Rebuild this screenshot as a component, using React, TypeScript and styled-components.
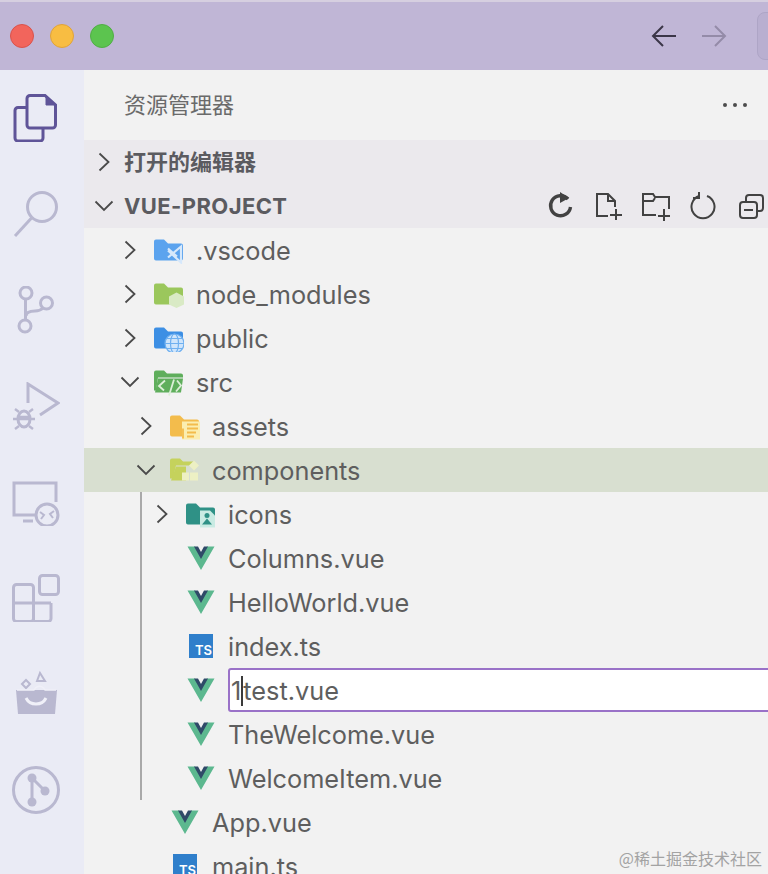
import React from "react";
import styled, { createGlobalStyle } from "styled-components";

const GlobalStyle = createGlobalStyle`
  html, body {
    margin: 0;
    padding: 0;
    background: #f2f2f2;
  }
  body {
    font-family: Inter, "Noto Sans CJK SC", sans-serif;
  }
`;

const Shell = styled.div`
  position: relative;
  width: 768px;
  height: 874px;
  overflow: hidden;
  background: #f2f2f2;
`;

const TitleBar = styled.div`
  display: flex;
  align-items: center;
  width: 800px;
  height: 70px;
  box-sizing: border-box;
  padding: 0 3px 0 10px;
  background: #c0b6d6;
  border-top: 2px solid #d6cfe0;
`;

const Light = styled.span<{ $color: string; $edge: string }>`
  width: 24px;
  height: 24px;
  box-sizing: border-box;
  border-radius: 50%;
  margin-right: 16px;
  background: ${(p) => p.$color};
  border: 1px solid ${(p) => p.$edge};
`;

const NavArrows = styled.div`
  display: flex;
  align-items: center;
  gap: 24px;
  margin-left: auto;
  margin-right: 30px;
`;

const SearchBox = styled.div`
  width: 40px;
  height: 48px;
  box-sizing: border-box;
  border-radius: 8px;
  background: #b9afd0;
  border: 1px solid #aea5c6;
`;

const Body = styled.div`
  display: flex;
  height: 804px;
`;

const ActivityBar = styled.nav`
  flex: 0 0 84px;
  background: #eaebf5;
`;

const ActivitySlot = styled.div`
  display: flex;
  align-items: center;
  height: 96px;
  padding-left: 12px;
`;

const SideBar = styled.section`
  flex: 1;
  min-width: 0;
  overflow: hidden;
`;

const PanelHeader = styled.div`
  display: flex;
  align-items: center;
  justify-content: space-between;
  height: 70px;
  box-sizing: border-box;
  padding: 0 21px 0 40px;
  font-size: 22px;
  color: #6a6a6a;
`;

const PanelTitle = styled.span`
  margin-bottom: 4px;
`;

const Dots = styled.div`
  display: flex;
  gap: 6px;
`;

const Dot = styled.span`
  width: 4px;
  height: 4px;
  border-radius: 50%;
  background: #4d4d4d;
`;

const SectionRow = styled.div`
  display: flex;
  align-items: center;
  height: 44px;
  padding: 0 2px 0 8px;
  background: #ebe9ed;
  color: #5b5b60;
  font-size: 22px;
  font-weight: 700;
`;

const SectionChevron = styled.span`
  display: flex;
  justify-content: center;
  width: 24px;
  margin-right: 8px;
`;

const CjkLabel = styled.span`
  margin-bottom: 4px;
`;

const ProjectLabel = styled.span`
  letter-spacing: 0.4px;
`;

const SectionTools = styled.div`
  display: flex;
  align-items: center;
  gap: 20px;
  margin-left: auto;
`;

const Row = styled.div<{ $indent: number; $selected?: boolean }>`
  display: flex;
  align-items: center;
  height: 44px;
  padding-left: ${(p) => p.$indent}px;
  background: ${(p) => (p.$selected ? "#d8dfd0" : "transparent")};
  color: #5e5e5e;
  font-size: 25.3px;
  white-space: nowrap;
`;

const Name = styled.span`
  margin-top: 1px;
`;

const ChevronSlot = styled.span`
  display: flex;
  justify-content: center;
  flex: 0 0 24px;
  margin-right: 12px;
`;

const IconSlot = styled.span`
  display: flex;
  align-items: center;
  justify-content: center;
  flex: 0 0 30px;
  margin-right: 12px;
`;

const Guide = styled.div`
  margin-left: 56px;
  border-left: 2px solid #a9a9a9;
`;

const TsBadge = styled.span`
  display: flex;
  align-items: flex-end;
  justify-content: flex-end;
  width: 24px;
  height: 24px;
  box-sizing: border-box;
  padding: 0 1px 1px 0;
  background: #2f7fcb;
  color: #ffffff;
  font-size: 13px;
  font-weight: 600;
  line-height: 13px;
`;

const NameInput = styled.div`
  flex: 1;
  height: 44px;
  box-sizing: border-box;
  display: flex;
  align-items: center;
  padding: 1px 0 0 1px;
  margin-right: -40px;
  background: #ffffff;
  border: 2px solid #9a72c8;
  border-radius: 3px 0 0 3px;
`;

const Caret = styled.span`
  display: inline-block;
  width: 2px;
  height: 30px;
  background: #3a3a3a;
`;

const Watermark = styled.div`
  position: absolute;
  right: 6px;
  bottom: 5px;
  font-family: "Noto Sans CJK SC", sans-serif;
  font-size: 16px;
  line-height: 22px;
  color: #a3a3a3;
`;

const Chevron = ({ open }: { open?: boolean }) =>
  open ? (
    <svg width="20" height="12" viewBox="0 0 20 12" fill="none" stroke="#4a4a4a" strokeWidth="1.8">
      <path d="M1.5 1.5 L10 10 L18.5 1.5" />
    </svg>
  ) : (
    <svg width="12" height="20" viewBox="0 0 12 20" fill="none" stroke="#4a4a4a" strokeWidth="1.8">
      <path d="M1.5 1.5 L10.5 10 L1.5 18.5" />
    </svg>
  );

const VueIcon = () => (
  <svg width="28" height="24" viewBox="0 0 28 24">
    <path d="M0.5 0.5 H8 L14 10 L20 0.5 H27.5 L14 24 Z" fill="#5cb88f" />
    <path d="M7 0.5 H11 L14 6 L17 0.5 H21 L14 13 Z" fill="#2f4a68" />
  </svg>
);

const FolderBox = ({ children }: { children: React.ReactNode }) => (
  <svg width="30" height="28" viewBox="0 -1.5 30 28">
    {children}
  </svg>
);

const FolderBase = ({ color }: { color: string }) => (
  <path d="M0 4 a2 2 0 0 1 2 -2 H10 L14 6 H27 a2 2 0 0 1 2 2 V21 a2 2 0 0 1 -2 2 H2 a2 2 0 0 1 -2 -2 Z" fill={color} />
);

const FolderVscode = () => (
  <FolderBox>
    <FolderBase color="#5ba3ee" />
    <path d="M14 11 L23 19 M14 20 L27 9 V25 L14 13" fill="none" stroke="#d6e8fb" strokeWidth="2.2" />
  </FolderBox>
);

const FolderNode = () => (
  <FolderBox>
    <FolderBase color="#9bc75c" />
    <path d="M22.5 11 L30 15 V23 L22.5 26.5 L15 23 V15 Z" fill="#d9eac5" />
  </FolderBox>
);

const FolderPublic = () => (
  <FolderBox>
    <FolderBase color="#3d8fe4" />
    <g fill="#cfe5fb" stroke="#6fb0f0" strokeWidth="1.2">
      <circle cx="20.5" cy="18" r="9.5" />
      <ellipse cx="20.5" cy="18" rx="4" ry="9.5" fill="none" />
      <path d="M11 18 H30 M12.5 13 H28.5 M12.5 23 H28.5" fill="none" />
    </g>
  </FolderBox>
);

const FolderSrc = () => (
  <FolderBox>
    <path d="M0 3 a2 2 0 0 1 2 -2 H10 L13 4 H27 a2 2 0 0 1 2 2 V8 H4 L2 21 H0 Z" fill="#5fae5c" />
    <path d="M4 9 H29 L27 23 H1 Z" fill="#5fae5c" />
    <path d="M11 11 L5 16.5 L10 21 M15 26 L20 10 M23 11 L27 16 L22 22" fill="none" stroke="#dcefd8" strokeWidth="1.8" />
  </FolderBox>
);

const FolderAssets = () => (
  <FolderBox>
    <FolderBase color="#f3bc4c" />
    <rect x="12" y="8" width="18" height="18" fill="#fbeeb0" />
    <path d="M13 15 V25 M17 11 H28 M17 15 H28 M17 19 H26 M17 23 H24" stroke="#f3bc4c" strokeWidth="1.8" />
  </FolderBox>
);

const FolderComponents = () => (
  <FolderBox>
    <path d="M0 3 a2 2 0 0 1 2 -2 H10 L13 4 H24 V8 H6 L3 21 H0 Z" fill="#c5d25c" />
    <path d="M6 9 H16 V23 H1 Z" fill="#c5d25c" />
    <rect x="12" y="15" width="7" height="8" fill="#edf0c4" />
    <rect x="20" y="15" width="8" height="8" fill="#edf0c4" />
    <path d="M24 3 L29 8 L24 13 L19 8 Z" fill="#edf0c4" />
  </FolderBox>
);

const FolderIcons = () => (
  <FolderBox>
    <FolderBase color="#2f9186" />
    <path d="M14 9 H24 L29 14 V26 H14 Z" fill="#c9ebe3" />
    <circle cx="21" cy="14" r="2.5" fill="#2f9186" />
    <path d="M16 23 L21 17 L26 23 Z" fill="#2f9186" />
  </FolderBox>
);

const Tool = ({ children }: { children: React.ReactNode }) => (
  <svg width="28" height="30" viewBox="0 0 28 30" fill="none" stroke="#424242" strokeWidth="2">
    {children}
  </svg>
);

const iconStroke = "#b9b8d0";

const Activity = ({ children, stroke = iconStroke }: { children: React.ReactNode; stroke?: string }) => (
  <ActivitySlot>
    <svg width="48" height="48" viewBox="0 0 48 48" fill="none" stroke={stroke} strokeWidth="3">
      {children}
    </svg>
  </ActivitySlot>
);

export default function App() {
  return (
    <Shell>
      <GlobalStyle />
      <TitleBar>
        <Light $color="#f2655c" $edge="#d9534c" />
        <Light $color="#f8bd42" $edge="#e0a33a" />
        <Light $color="#5cc44f" $edge="#50ae45" />
        <NavArrows>
          <svg width="26" height="24" viewBox="0 0 26 24" fill="none" stroke="#3b3648" strokeWidth="2">
            <path d="M25 12 H2 M12 2 L2 12 L12 22" />
          </svg>
          <svg width="26" height="24" viewBox="0 0 26 24" fill="none" stroke="#948ba8" strokeWidth="2">
            <path d="M1 12 H24 M14 2 L24 12 L14 22" />
          </svg>
        </NavArrows>
        <SearchBox />
      </TitleBar>
      <Body>
        <ActivityBar>
          <Activity stroke="#5f5498">
            <path d="M18 1.5 H33 L43.5 11 V31 a3 3 0 0 1 -3 3 H18 a3 3 0 0 1 -3 -3 V4.5 a3 3 0 0 1 3 -3 Z" />
            <path d="M34 2 L43.5 11 H34 Z" fill="#5f5498" strokeWidth="1" />
            <path d="M15 13.5 H6 a3 3 0 0 0 -3 3 V44 a3 3 0 0 0 3 3 H28 a3 3 0 0 0 3 -3 V35" />
          </Activity>
          <Activity>
            <circle cx="30" cy="17" r="14.5" />
            <path d="M3 46 L19.5 28" />
          </Activity>
          <Activity>
            <circle cx="14" cy="7" r="6" />
            <circle cx="34.5" cy="17" r="6" />
            <circle cx="13" cy="40" r="6" />
            <path d="M13.5 13 V34 M14 30 C14 26 18 25 23 25 C27 25 29 24 31 22" />
          </Activity>
          <Activity>
            <path d="M16 21 V2 L46 21 L28 33" />
            <ellipse cx="12" cy="37" rx="6" ry="8" />
            <path d="M1 37 H23 M7 30 L3 27 M17 30 L21 27 M7 44 L3 47 M17 44 L21 47 M6 35 H18" strokeWidth="2.4" />
          </Activity>
          <Activity>
            <path d="M44 24 V5 H2 V37 H24" />
            <path d="M11 43 H21" />
            <circle cx="35" cy="37" r="11" />
            <path d="M28 34 L32 37 L29 41 M42 33 L38 36 L41 40" strokeWidth="2" />
          </Activity>
          <Activity>
            <rect x="1.5" y="10.5" width="20" height="37" rx="3" />
            <path d="M1.5 29 H39 M21.5 29 V47.5 M21.5 47.5 H36 a3 3 0 0 0 3 -3 V29" />
            <rect x="27.5" y="1.5" width="19" height="19" rx="3" />
          </Activity>
          <Activity>
            <path d="M4 20 H45 L43 44 H6 Z" fill={iconStroke} stroke="none" />
            <path d="M14 28 C18 36 30 36 34 28" stroke="#f0f0f8" strokeWidth="3" />
            <path d="M10 14 L14 10 L18 14 L14 18 Z M25 11 L28 3 L33 11 Z" strokeWidth="2" />
            <path d="M5 20 H22 C25 15 30 15 33 20 H44" stroke="#f0f0f8" strokeWidth="1.4" />
          </Activity>
          <Activity>
            <circle cx="24" cy="24" r="22.5" />
            <path d="M20 12 V36 M20 12 L33 25" />
            <circle cx="20" cy="12" r="4.5" fill={iconStroke} stroke="none" />
            <circle cx="33" cy="25" r="4.5" fill={iconStroke} stroke="none" />
            <circle cx="20" cy="36" r="4.5" fill={iconStroke} stroke="none" />
          </Activity>
        </ActivityBar>
        <SideBar>
          <PanelHeader>
            <PanelTitle>资源管理器</PanelTitle>
            <Dots>
              <Dot />
              <Dot />
              <Dot />
            </Dots>
          </PanelHeader>
          <SectionRow>
            <SectionChevron>
              <Chevron />
            </SectionChevron>
            <CjkLabel>打开的编辑器</CjkLabel>
          </SectionRow>
          <SectionRow>
            <SectionChevron>
              <Chevron open />
            </SectionChevron>
            <ProjectLabel>VUE-PROJECT</ProjectLabel>
            <SectionTools>
              <Tool>
                <path d="M22 8 A10 10 0 1 0 24.5 16" strokeWidth="3.4" />
                <path d="M14 1 L23 7 L14 12 Z" fill="#424242" stroke="none" />
              </Tool>
              <Tool>
                <path d="M14 25 H3 V3 H14 L21 10 V16 M14 3 V10 H21 M22 18 V29 M16 24 H28" />
              </Tool>
              <Tool>
                <path d="M14 24 H1 V3 H11 L13 6 H27 V18 M1 10 H11 L13 7 M22 18 V30 M16 25 H28" />
              </Tool>
              <Tool>
                <path d="M9 5 A11.5 11.5 0 1 0 17 5" />
                <path d="M9 1 V7 H3" strokeWidth="2" />
              </Tool>
              <Tool>
                <rect x="2" y="11" width="17" height="16" rx="3" />
                <path d="M8 11 V7 a3 3 0 0 1 3 -3 H22 a3 3 0 0 1 3 3 V17 a3 3 0 0 1 -3 3 H19 M6 19 H15" />
              </Tool>
            </SectionTools>
          </SectionRow>
          <Row $indent={34}>
            <ChevronSlot><Chevron /></ChevronSlot>
            <IconSlot><FolderVscode /></IconSlot>
            <Name>.vscode</Name>
          </Row>
          <Row $indent={34}>
            <ChevronSlot><Chevron /></ChevronSlot>
            <IconSlot><FolderNode /></IconSlot>
            <Name>node_modules</Name>
          </Row>
          <Row $indent={34}>
            <ChevronSlot><Chevron /></ChevronSlot>
            <IconSlot><FolderPublic /></IconSlot>
            <Name>public</Name>
          </Row>
          <Row $indent={34}>
            <ChevronSlot><Chevron open /></ChevronSlot>
            <IconSlot><FolderSrc /></IconSlot>
            <Name>src</Name>
          </Row>
          <Row $indent={50}>
            <ChevronSlot><Chevron /></ChevronSlot>
            <IconSlot><FolderAssets /></IconSlot>
            <Name>assets</Name>
          </Row>
          <Row $indent={50} $selected>
            <ChevronSlot><Chevron open /></ChevronSlot>
            <IconSlot><FolderComponents /></IconSlot>
            <Name>components</Name>
          </Row>
          <Guide>
            <Row $indent={8}>
              <ChevronSlot><Chevron /></ChevronSlot>
              <IconSlot><FolderIcons /></IconSlot>
              <Name>icons</Name>
            </Row>
            <Row $indent={44}>
              <IconSlot><VueIcon /></IconSlot>
              <Name>Columns.vue</Name>
            </Row>
            <Row $indent={44}>
              <IconSlot><VueIcon /></IconSlot>
              <Name>HelloWorld.vue</Name>
            </Row>
            <Row $indent={44}>
              <IconSlot><TsBadge>TS</TsBadge></IconSlot>
              <Name>index.ts</Name>
            </Row>
            <Row $indent={44}>
              <IconSlot><VueIcon /></IconSlot>
              <NameInput>
                1<Caret />test.vue
              </NameInput>
            </Row>
            <Row $indent={44}>
              <IconSlot><VueIcon /></IconSlot>
              <Name>TheWelcome.vue</Name>
            </Row>
            <Row $indent={44}>
              <IconSlot><VueIcon /></IconSlot>
              <Name>WelcomeItem.vue</Name>
            </Row>
          </Guide>
          <Row $indent={86}>
            <IconSlot><VueIcon /></IconSlot>
            <Name>App.vue</Name>
          </Row>
          <Row $indent={86}>
            <IconSlot><TsBadge>TS</TsBadge></IconSlot>
            <Name>main.ts</Name>
          </Row>
        </SideBar>
      </Body>
      <Watermark>@稀土掘金技术社区</Watermark>
    </Shell>
  );
}
